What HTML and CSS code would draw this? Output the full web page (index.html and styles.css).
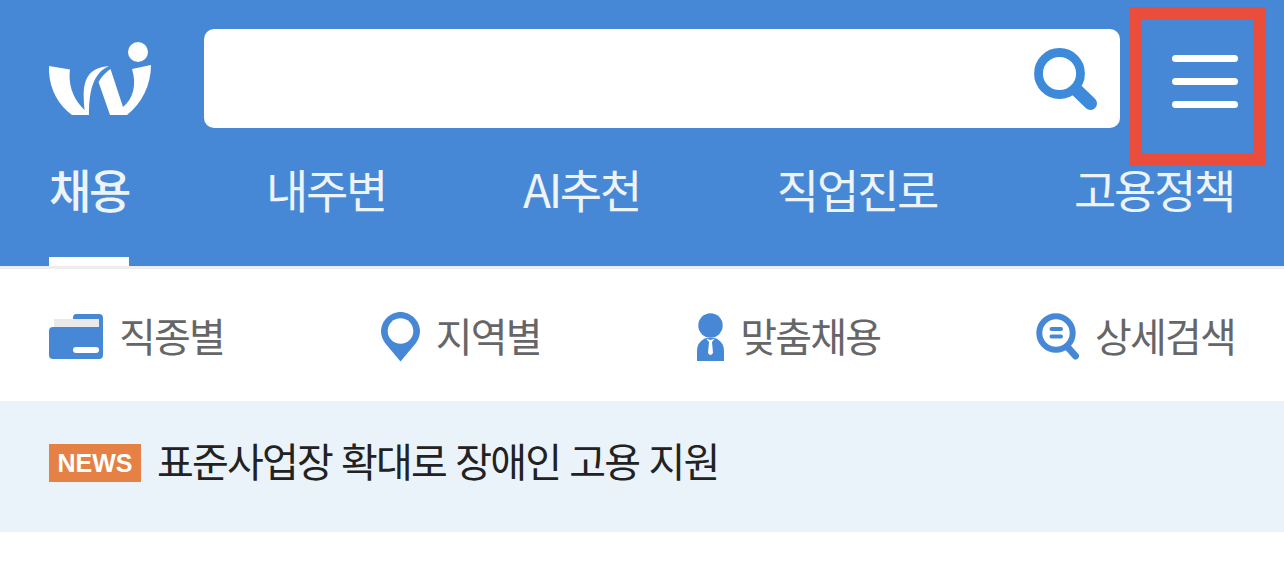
FILE: index.html
```html
<!DOCTYPE html>
<html lang="ko">
  <head>
    <meta charset="UTF-8" />
    <meta name="viewport" content="width=device-width, initial-scale=1.0" />
    <title>채용</title>
    <link rel="stylesheet" href="styles.css">
  </head>
  <body>
    <header>
      <div class="top-bar">
        <a class="logo" href="#">
          <svg width="104" height="75" viewBox="0 0 104 75" fill="#fff">
            <circle cx="89" cy="11" r="10" />
            <path d="M0 25 L21 28.5 C19 44 24 58 35.5 69 C33 44 35 27 60 25 C44 32 40 50 40 74 H23 C9 64 -1 46 0 25 Z" />
            <path d="M61.5 28 L74 66 C84 58 88 44 83 28 L102 24 C102 44 93 62 78 74 H61 L49.5 41 C53 35 57 31 61.5 28 Z" />
          </svg>
        </a>
        <div class="search">
          <input type="text" class="search-input" />
          <button class="search-button">
            <svg width="64" height="64" viewBox="0 0 64 64" fill="none" stroke="#3d8adb">
              <circle cx="25.5" cy="26.5" r="21" stroke-width="8.8" />
              <path d="M42 42.5 L56.5 56.5" stroke-width="13" stroke-linecap="round" />
            </svg>
          </button>
        </div>
        <button class="menu-button">
          <span class="menu-line"></span>
          <span class="menu-line"></span>
          <span class="menu-line"></span>
        </button>
      </div>
      <nav class="tabs">
        <a class="tab active" href="#">채용</a>
        <a class="tab" href="#">내주변</a>
        <a class="tab" href="#">AI추천</a>
        <a class="tab" href="#">직업진로</a>
        <a class="tab" href="#">고용정책</a>
      </nav>
    </header>

    <nav class="shortcuts">
      <a class="shortcut" href="#">
        <svg width="54" height="45" viewBox="0 0 54 45">
          <path d="M27 0 H50 Q54 0 54 4 V41 Q54 45 50 45 H4 Q0 45 0 41 V17 Q0 13 4 13 H24 V4 Q24 0 27 0 Z" fill="#4788d6" />
          <path d="M5 5 H50 V13 H5 Z" fill="#e9e9e9" />
          <rect x="24" y="33" width="26" height="6" rx="3" fill="#fff" />
        </svg>
        <span>직종별</span>
      </a>
      <a class="shortcut" href="#">
        <svg width="40" height="50" viewBox="0 0 40 50">
          <path d="M20.5 0 C10 0 1 9 1 19.5 C1 24 3 28 5 31 L20.5 49.5 L36 31 C38 28 40 24 40 19.5 C40 9 31 0 20.5 0 Z" fill="#4788d6" />
          <circle cx="20.5" cy="19" r="12.8" fill="#fff" />
        </svg>
        <span>지역별</span>
      </a>
      <a class="shortcut" href="#">
        <svg width="28" height="48" viewBox="0 0 28 48" fill="#4788d6">
          <circle cx="14.5" cy="12.5" r="12.2" />
          <path d="M1 48 V38 C1 31 5 27 10 25 H19 C24 27 28 31 28 38 V48 Z" />
          <path d="M10 25.5 L14.5 27 L19 25.5 L16 29 L17 40 Q14.5 44 12 40 L13 29 Z" fill="#fff" />
        </svg>
        <span>맞춤채용</span>
      </a>
      <a class="shortcut" href="#">
        <svg width="43" height="47" viewBox="0 0 43 47" fill="none" stroke="#4788d6">
          <circle cx="20" cy="20" r="16.7" stroke-width="6" />
          <path d="M31.5 34 L39.5 43" stroke-width="7" stroke-linecap="round" />
          <path d="M15.5 16 H25 M15.5 23.5 H25" stroke-width="4" stroke-linecap="round" />
        </svg>
        <span>상세검색</span>
      </a>
    </nav>

    <a class="news" href="#">
      <span class="news-badge">NEWS</span>
      <span class="news-title">표준사업장 확대로 장애인 고용 지원</span>
    </a>
  </body>
</html>
```
FILE: styles.css
```css
* {
  box-sizing: border-box;
}
body {
  margin: 0;
  background-color: #fff;
  font-family: "Noto Sans CJK KR", sans-serif;
}
a {
  text-decoration: none;
  color: inherit;
}
button {
  padding: 0;
  border: none;
  background: none;
  cursor: pointer;
}
svg {
  display: block;
  flex-shrink: 0;
}
header {
  height: 269px;
  background-color: #4788d6;
  border-bottom: 3px solid #ededed;
}
.top-bar {
  display: flex;
  align-items: flex-start;
  height: 157px;
  padding: 7px 18px 0 49px;
}
.logo {
  width: 155px;
  padding-top: 34px;
}
.search {
  display: flex;
  align-items: center;
  width: 916px;
  height: 99px;
  margin-top: 22px;
  padding-right: 22px;
  background-color: #fff;
  border-radius: 10px;
}
.search-input {
  flex: 1;
  height: 100%;
  padding: 0 24px;
  border: none;
  outline: none;
  background: none;
  font-size: 40px;
}
.menu-button {
  position: relative;
  z-index: 1;
  display: flex;
  flex-direction: column;
  align-items: flex-end;
  gap: 16px;
  width: 137px;
  height: 159px;
  margin-left: 9px;
  padding: 35px 15px 0 0;
  border: 13px solid #ea4d3b;
}
.menu-line {
  width: 66px;
  height: 7px;
  border-radius: 4px;
  background-color: #fff;
}
.tabs {
  display: flex;
  justify-content: space-between;
  height: 109px;
  padding: 0 50px 0 49px;
}
.tab {
  height: 109px;
  font-size: 46px;
  line-height: 63px;
  letter-spacing: -2.3px;
  color: #ecf3f9;
}
.tab.active {
  font-weight: 500;
  border-bottom: 9px solid #fff;
}
.shortcuts {
  display: flex;
  justify-content: space-between;
  align-items: center;
  height: 132px;
  padding: 3px 49px 0;
}
.shortcut {
  display: flex;
  align-items: center;
  gap: 16px;
  font-size: 40px;
  line-height: 60px;
  letter-spacing: -1.8px;
  color: #666669;
}
.shortcut span {
  padding-bottom: 3px;
}
.news {
  display: flex;
  align-items: center;
  gap: 16px;
  height: 131px;
  padding: 0 49px 7px;
  background-color: #ebf3fa;
}
.news-badge {
  width: 92px;
  height: 38px;
  background-color: #e58144;
  color: #fff;
  font-family: "Liberation Sans", Arial, sans-serif;
  font-size: 25px;
  font-weight: 700;
  line-height: 39px;
  text-align: center;
}
.news-title {
  padding-bottom: 7px;
  font-size: 40px;
  line-height: 60px;
  letter-spacing: -1.8px;
  word-spacing: -0.3px;
  color: #222;
}
```
